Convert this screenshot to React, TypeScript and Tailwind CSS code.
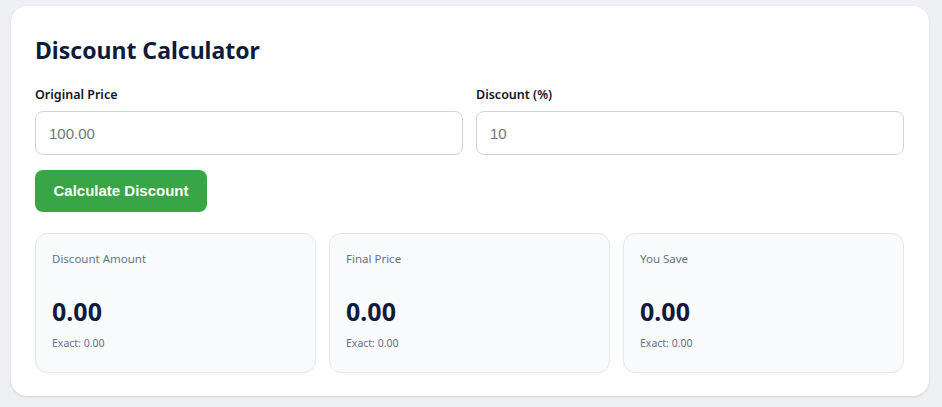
import React, { useState } from 'react';

const font = { fontFamily: '"Noto Sans", "Open Sans", sans-serif' };
const arial = { fontFamily: '"Liberation Sans", Arial, sans-serif' };

function ResultCard({ label, value, exact }: { label: string; value: string; exact: string }) {
  return (
    <div className="rounded-xl border border-[#e2e8f0] bg-[#f8fafc] px-4 pt-[17px] pb-[20px] h-[140px] flex flex-col">
      <div className="text-[11.5px] leading-4 text-[#64748b]">{label}</div>
      <div className="mt-[28px] text-[25px] leading-8 font-bold text-[#0f1b3a]">{value}</div>
      <div className="mt-[8px] text-[10.5px] leading-4 text-[#64748b]">Exact: {exact}</div>
    </div>
  );
}

export default function App() {
  const [price, setPrice] = useState('');
  const [discount, setDiscount] = useState('');

  return (
    <div className="min-h-screen bg-[#eef0f4] pl-[11px] pr-[13px] pt-[6px]" style={font}>
      <div className="bg-white rounded-2xl shadow-sm pl-6 pr-[25px] pt-[28px] pb-[23px]">
        <h1 className="text-[23px] leading-8 font-bold text-[#0f1b3a]">Discount Calculator</h1>

        <div className="mt-[21px] grid grid-cols-2 gap-[13px]">
          <div>
            <label className="block text-[12.5px] leading-4 font-semibold text-[#0f172a] mb-[8px]">Original Price</label>
            <input
              value={price}
              onChange={e => setPrice(e.target.value)}
              placeholder="100.00"
              className="w-full h-[44px] rounded-lg border border-[#cbd5e1] px-[13px] text-[15px] text-[#334155] placeholder:text-[#757575] outline-none"
              style={arial}
            />
          </div>
          <div>
            <label className="block text-[12.5px] leading-4 font-semibold text-[#0f172a] mb-[8px]">Discount (%)</label>
            <input
              value={discount}
              onChange={e => setDiscount(e.target.value)}
              placeholder="10"
              className="w-full h-[44px] rounded-lg border border-[#cbd5e1] px-[13px] text-[15px] text-[#334155] placeholder:text-[#757575] outline-none"
              style={arial}
            />
          </div>
        </div>

        <button
          className="mt-[15px] h-[42px] w-[172px] rounded-lg bg-[#38a546] text-white text-[15px] font-bold"
          style={arial}
        >
          Calculate Discount
        </button>

        <div className="mt-[21px] grid grid-cols-3 gap-[13px]">
          <ResultCard label="Discount Amount" value="0.00" exact="0.00" />
          <ResultCard label="Final Price" value="0.00" exact="0.00" />
          <ResultCard label="You Save" value="0.00" exact="0.00" />
        </div>
      </div>
    </div>
  );
}
